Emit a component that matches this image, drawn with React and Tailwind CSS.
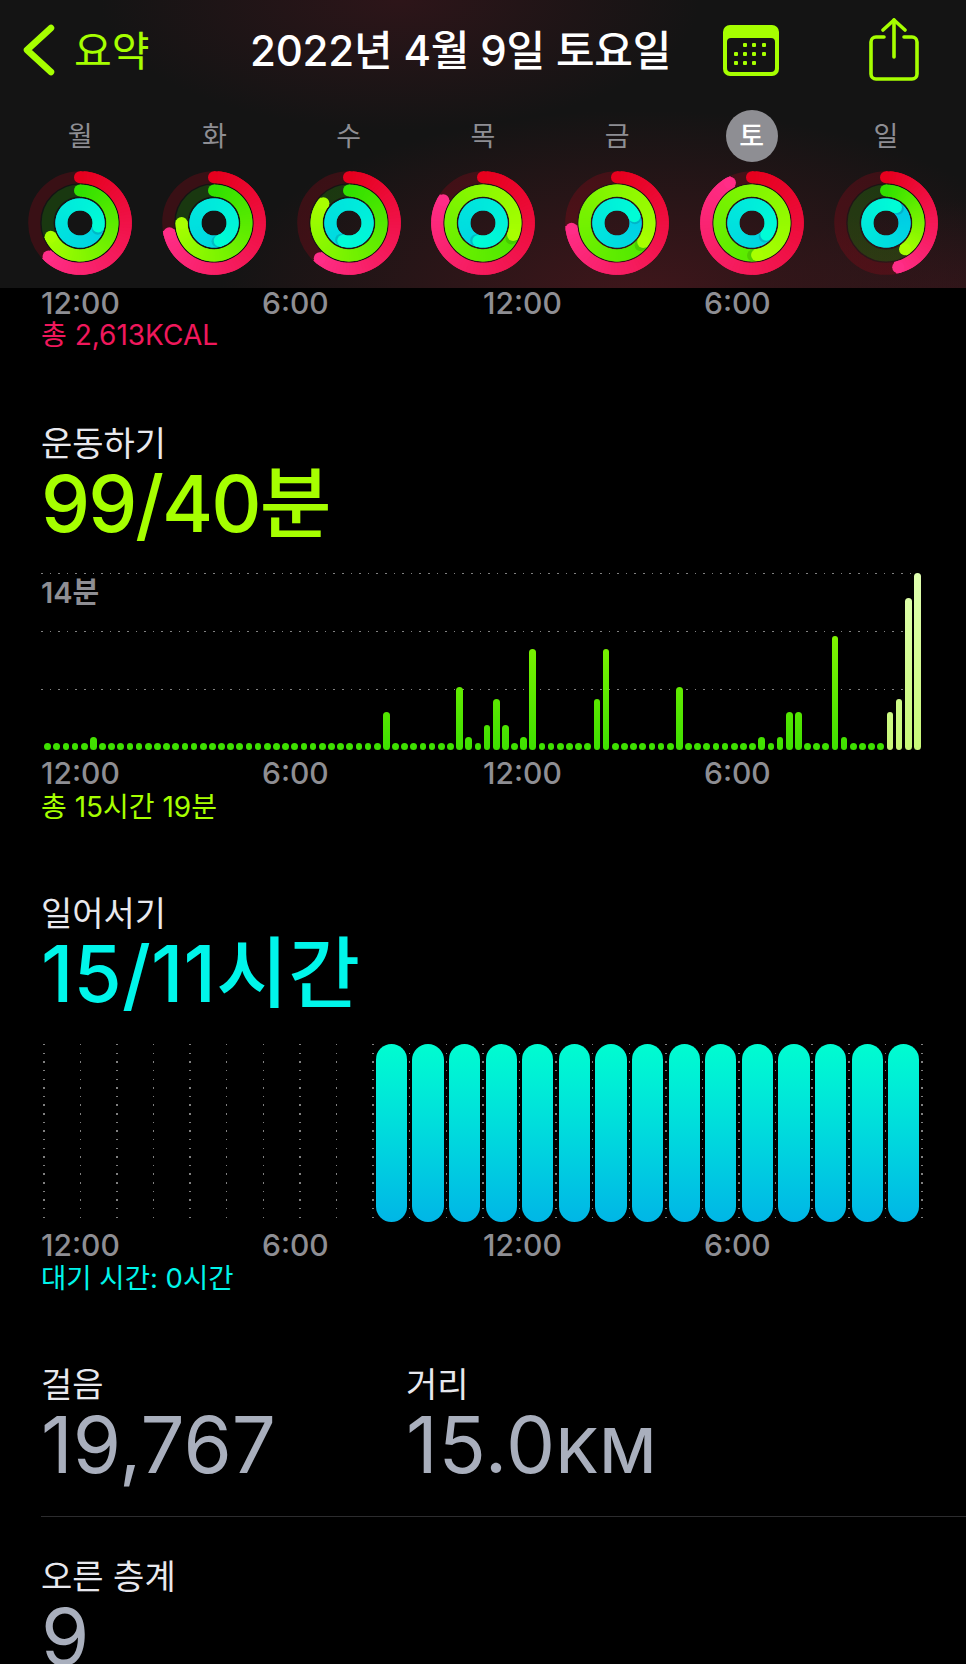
import React from 'react'

const days = [
  { label: '월', move: 0.62, exercise: 0.68, stand: 1.28 },
  { label: '화', move: 0.714, exercise: 0.75, stand: 1.45 },
  { label: '수', move: 0.61, exercise: 0.855, stand: 1.55 },
  { label: '목', move: 0.833, exercise: 1.31, stand: 1.54 },
  { label: '금', move: 0.73, exercise: 1.35, stand: 1.19 },
  { label: '토', move: 0.92, exercise: 1.475, stand: 1.36, active: true },
  { label: '일', move: 0.457, exercise: 0.4, stand: 1.09 },
]

const ringColors = {
  move: [[230, 0, 30], [255, 45, 135]],
  exercise: [[50, 224, 0], [168, 255, 0]],
  stand: [[0, 196, 232], [0, 252, 214]],
}

// minutes per 15 min slot, anything missing is a dot
const exerciseBars = {
  5: 1, 37: 3, 45: 5, 46: 1, 48: 2, 49: 4, 50: 2, 52: 1, 53: 8, 60: 4, 61: 8, 69: 5,
  78: 1, 80: 1, 81: 3, 82: 3, 86: 9, 87: 1, 92: 3, 93: 4, 94: 12, 95: 14,
}

function mix(a, b, t) {
  return `rgb(${a.map((v, i) => Math.round(v + (b[i] - v) * t)).join(',')})`
}

function point(r, turn) {
  const a = turn * Math.PI * 2
  return [52 + r * Math.sin(a), 52 - r * Math.cos(a)]
}

function Arc({ r, value, colors }) {
  const wrapped = value > 1
  const sweep = wrapped ? 1 : value
  const from = wrapped ? value - 1 : 0
  // a ring past 100% only shows its last lap, so it starts part way up the gradient
  const tStart = wrapped ? 1 - 1 / value : 0
  const steps = Math.ceil(sweep * 90)
  const segs = []
  for (let i = 0; i < steps; i++) {
    const a = point(r, from + (sweep * i) / steps)
    const b = point(r, from + (sweep * (i + 2)) / steps)
    segs.push(
      <path
        key={i}
        d={`M${a[0]} ${a[1]}A${r} ${r} 0 0 1 ${b[0]} ${b[1]}`}
        fill="none"
        stroke={mix(colors[0], colors[1], tStart + (1 - tStart) * (i / steps))}
        strokeWidth="12"
      />
    )
  }
  const start = point(r, from)
  const end = point(r, value)
  const shade = point(r, value + 0.02)
  return (
    <g>
      <circle cx="52" cy="52" r={r} fill="none" stroke={mix(colors[0], colors[1], 0)} strokeOpacity="0.18" strokeWidth="12" />
      {!wrapped && <circle cx={start[0]} cy={start[1]} r="6" fill={mix(colors[0], colors[1], 0)} />}
      {segs}
      {wrapped && <circle cx={shade[0]} cy={shade[1]} r="6" fill="#000" opacity="0.12" />}
      <circle cx={end[0]} cy={end[1]} r="6" fill={mix(colors[0], colors[1], 1)} />
    </g>
  )
}

function Rings({ day }) {
  return (
    <svg width="104" height="104" viewBox="0 0 104 104">
      <Arc r={45.8} value={day.move} colors={ringColors.move} />
      <Arc r={32.4} value={day.exercise} colors={ringColors.exercise} />
      <Arc r={18.6} value={day.stand} colors={ringColors.stand} />
    </svg>
  )
}

function Header() {
  return (
    <div className="h-[288px] shrink-0 bg-[#141414] bg-[radial-gradient(ellipse_300px_130px_at_400px_0px,#2d1519,transparent),radial-gradient(ellipse_420px_190px_at_640px_300px,#40161b,transparent),radial-gradient(ellipse_200px_100px_at_960px_300px,#2e1519,transparent)]">
      <div className="flex h-[102px] items-center">
        <svg width="40" height="60" viewBox="0 0 40 60" className="ml-[19px] -mt-[2px] shrink-0" fill="none">
          <path d="M32 8L8 30L32 52" stroke="#a6ff00" strokeWidth="6.5" strokeLinecap="round" strokeLinejoin="round" />
        </svg>
        <span className="ml-[15px] w-[176px] shrink-0 text-[41px] leading-[44px] text-[#a6ff00]">요약</span>
        <span className="w-[473px] shrink-0 text-[42px] leading-[44px] font-medium tracking-[-0.2px] whitespace-nowrap text-white">2022년 4월 9일 토요일</span>
        <svg width="56" height="52" viewBox="0 0 56 52" className="shrink-0">
          <path fillRule="evenodd" fill="#a6ff00" d="M7 0H49A7 7 0 0 1 56 7V44A7 7 0 0 1 49 51H7A7 7 0 0 1 0 44V7A7 7 0 0 1 7 0ZM8 13A4 4 0 0 0 4 17V43A4 4 0 0 0 8 47H48A4 4 0 0 0 52 43V17A4 4 0 0 0 48 13Z" />
          {[[22, 20], [31, 20], [41, 20], [13, 29], [22, 29], [31, 29], [41, 29], [13, 38], [22, 38], [31, 38]].map(([x, y]) => (
            <rect key={`${x}-${y}`} x={x - 2} y={y - 2} width="4" height="4" rx="1" fill="#a6ff00" />
          ))}
        </svg>
        <svg width="50" height="64" viewBox="0 0 50 64" className="ml-[90px] -mt-[3px] shrink-0" fill="none" stroke="#a6ff00" strokeWidth="3.6" strokeLinecap="round" strokeLinejoin="round">
          <path d="M15 19H7A5 5 0 0 0 2 24V56A5 5 0 0 0 7 61H43A5 5 0 0 0 48 56V24A5 5 0 0 0 43 19H35" />
          <path d="M25 2V39" />
          <path d="M14 12L25 2L36 12" />
        </svg>
      </div>
      <div className="grid grid-cols-7 px-[13px]">
        {days.map(day => (
          <div key={day.label} className="flex flex-col items-center">
            <div className={`mt-[8px] flex h-[52px] w-[52px] items-center justify-center rounded-full text-[27px] leading-none ${day.active ? 'bg-[#8e8e93] font-medium text-white' : 'text-[#8e8e93]'}`}>
              {day.label}
            </div>
            <div className="mt-[9px]">
              <Rings day={day} />
            </div>
          </div>
        ))}
      </div>
    </div>
  )
}

function Axis() {
  return (
    <div className="grid h-[30px] w-[884px] grid-cols-4 text-[30px] leading-[30px] font-medium text-[#8e8e93]">
      <span>12:00</span>
      <span>6:00</span>
      <span>12:00</span>
      <span>6:00</span>
    </div>
  )
}

function ExerciseChart() {
  const bars = Array.from({ length: 96 }, (_, i) => exerciseBars[i] || 0)
  return (
    <div className="relative mt-[29px] h-[177px] w-[885px]">
      {['top-0 w-[870px]', 'top-[58px] w-[862px]', 'top-[116px] w-[862px]'].map(pos => (
        <div key={pos} className={`absolute left-0 h-px bg-[repeating-linear-gradient(to_right,#808080_0,#808080_1.5px,transparent_1.5px,transparent_8.6px)] ${pos}`} />
      ))}
      <span className="absolute top-[5px] left-0 text-[29px] leading-[30px] font-semibold text-[#8e8e93]">14분</span>
      <div className="absolute inset-x-0 bottom-0 flex items-end gap-[2.47px] pl-[3.2px]">
        {bars.map((v, i) => {
          const h = v === 0 ? 6.7 : v * 12.64
          const light = i >= 92
          const t = Math.min(v / 10, 1)
          const top = light ? mix([200, 248, 120], [224, 255, 176], v / 14) : mix([62, 224, 0], [134, 245, 0], t)
          const bottom = light ? 'rgb(200,248,120)' : 'rgb(62,224,0)'
          return (
            <div
              key={i}
              className="w-[6.7px] shrink-0 rounded-full"
              style={{ height: h, background: `linear-gradient(to top, ${bottom}, ${top})` }}
            />
          )
        })}
      </div>
    </div>
  )
}

function StandChart() {
  return (
    <div className="relative mt-[30px] h-[178px] w-[885px]">
      <div className="absolute top-0 left-[2px] flex h-[174px] w-[880px] justify-between">
        {Array.from({ length: 25 }, (_, i) => (
          <div key={i} className="h-full w-[1.5px] bg-[repeating-linear-gradient(to_bottom,#808080_0,#808080_1.5px,transparent_1.5px,transparent_8.63px)]" />
        ))}
      </div>
      <div className="relative ml-[2.7px] grid h-full w-[878.4px] grid-cols-24">
        {Array.from({ length: 24 }, (_, i) => (
          <div key={i} className="px-[2.65px]">
            {i >= 9 && <div className="h-full rounded-full bg-gradient-to-b from-[#00fdd0] to-[#00b6e6]" />}
          </div>
        ))}
      </div>
    </div>
  )
}

function Heading({ children, className = '' }) {
  return <div className={`h-[40px] text-[34px] leading-[40px] text-[#e8e8ed] ${className}`}>{children}</div>
}

export default function App() {
  return (
    <div className="flex h-[1664px] w-[966px] flex-col overflow-hidden bg-black font-['Inter','Noto_Sans_CJK_KR',sans-serif]">
      <Header />
      <div className="pl-[41px]">
        <Axis />
        <div className="mt-[2px] h-[30px] text-[28px] leading-[30px] text-[#f0185c]">총 2,613KCAL</div>

        <Heading className="mt-[74px]">운동하기</Heading>
        <div className="h-[80px] text-[78px] leading-[80px] font-medium tracking-[-2px] whitespace-nowrap text-[#a6ff00]">99/40분</div>
        <ExerciseChart />
        <div className="mt-[8px]"><Axis /></div>
        <div className="mt-[4px] h-[30px] text-[28px] leading-[30px] text-[#a6ff00]">총 15시간 19분</div>

        <Heading className="mt-[72px]">일어서기</Heading>
        <div className="h-[80px] text-[78px] leading-[80px] font-medium tracking-[0.2px] whitespace-nowrap text-[#00f5ea]">15/11시간</div>
        <StandChart />
        <div className="mt-[8px]"><Axis /></div>
        <div className="mt-[3px] h-[30px] text-[27.5px] leading-[30px] text-[#00f5ea]">대기 시간: 0시간</div>

        <div className="mt-[72px] flex">
          <div className="w-[365px]">
            <Heading>걸음</Heading>
            <div className="h-[80px] text-[78px] leading-[80px] text-[#a9afbd]">19,767</div>
          </div>
          <div>
            <Heading>거리</Heading>
            <div className="h-[80px] text-[78px] leading-[80px] tracking-[0.8px] text-[#a9afbd]">15.0<span className="text-[62px] font-medium">KM</span></div>
          </div>
        </div>
        <div className="mt-[31px] h-px bg-[#2c2c2e]" />
        <Heading className="mt-[40px]">오른 층계</Heading>
        <div className="h-[80px] text-[78px] leading-[80px] text-[#a9afbd]">9</div>
      </div>
    </div>
  )
}
